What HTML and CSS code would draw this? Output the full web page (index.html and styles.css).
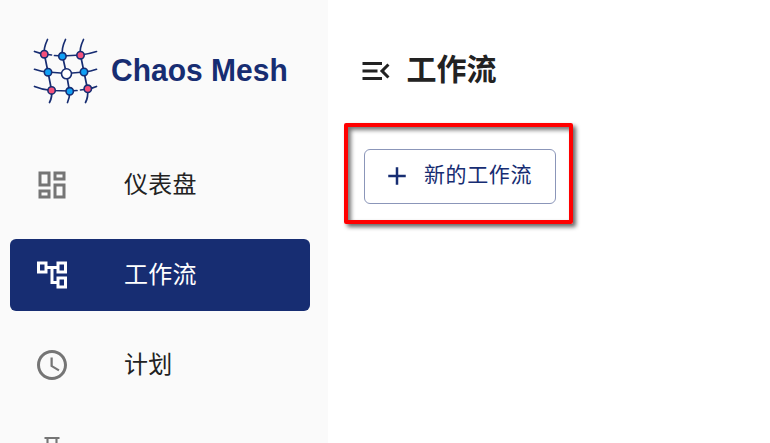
FILE: index.html
```html
<!DOCTYPE html>
<html lang="zh-CN">
<head>
<meta charset="utf-8">
<title>Chaos Mesh</title>
<link rel="stylesheet" href="styles.css">
</head>
<body>
<div class="app">
  <aside class="sidebar">
    <div class="brand">
      <svg class="brand-mark" viewBox="0 0 80 80">
        <g class="mesh">
          <path d="M22.500 9.500Q18 19 19.500 25L23 42L26.500 60Q27.500 67 24.500 72.500"/>
          <path d="M40.500 9.500Q36 19 37.500 26L41.500 44L44.500 61Q45 67 42.500 72.500"/>
          <path d="M58.500 9.500Q54 19 55.500 25L59 42L62.500 59Q63.500 67 60.500 72.500"/>
          <path d="M9.500 21.500Q15 23.500 19.500 24L26.500 25M29.500 25.500L37.500 26L55.500 25Q64 24 71.500 21.500"/>
          <path d="M9.500 39.300Q17 42 23 42L41.500 43.500L59 42Q66 41.500 71.500 39.300"/>
          <path d="M9.500 56.500Q18 60 26.500 60.500L44.500 61L52 60.500M55.500 60L62.500 59Q67 58.500 71.500 56.500"/>
        </g>
        <g class="node pink">
          <circle cx="19.300" cy="24.200" r="3.700"/><circle cx="55.500" cy="25.200" r="3.700"/>
          <circle cx="26.600" cy="60.400" r="3.700"/><circle cx="62.800" cy="58.800" r="3.700"/>
        </g>
        <g class="node blue">
          <circle cx="37.400" cy="26.300" r="3.700"/><circle cx="23" cy="42.200" r="3.700"/>
          <circle cx="59" cy="42" r="3.700"/><circle cx="44.700" cy="61.300" r="3.700"/>
        </g>
        <circle class="node white" cx="41.500" cy="43.800" r="5"/>
      </svg>
      <span class="brand-name">Chaos Mesh</span>
    </div>
    <nav class="nav">
      <a class="nav-item">
        <svg class="icon" viewBox="0 0 24 24"><path d="M19 5v2h-4V5h4M9 5v6H5V5h4m10 8v6h-4v-6h4M9 17v2H5v-2h4M21 3h-8v6h8V3zM11 3H3v10h8V3zm10 8h-8v10h8V11zm-10 4H3v6h8v-6z"/></svg>
        <span>仪表盘</span>
      </a>
      <a class="nav-item active">
        <svg class="icon" viewBox="0 0 24 24"><path d="M22 11V3h-7v3H9V3H2v8h7V8h2v10h4v3h7v-8h-7v3h-2V8h2v3h7zM7 9H4V5h3v4zm10 6h3v4h-3v-4zm0-10h3v4h-3V5z"/></svg>
        <span>工作流</span>
      </a>
      <a class="nav-item">
        <svg class="icon" viewBox="0 0 24 24"><path d="M11.990 2C6.470 2 2 6.480 2 12s4.470 10 9.990 10C17.520 22 22 17.520 22 12S17.520 2 11.990 2zM12 20c-4.420 0-8-3.580-8-8s3.580-8 8-8 8 3.580 8 8-3.580 8-8 8zm.5-13H11v6l5.250 3.150.75-1.230-4.500-2.670z"/></svg>
        <span>计划</span>
      </a>
      <a class="nav-item">
        <svg class="icon" viewBox="0 0 24 24"><path d="M7 0h10v1.400h-1.300V9l5 11v3H3.300v-3l5-11V1.400H7zM9.700 1.400V9.300L5 20v1.500h14V20L14.300 9.300V1.400z"/></svg>
      </a>
    </nav>
  </aside>
  <main class="content">
    <header class="page-head">
      <svg class="icon" viewBox="0 0 24 24"><path d="M3 18h13v-2H3v2zm0-5h10v-2H3v2zm0-7v2h13V6H3zm18 9.590L17.420 12 21 8.410 19.590 7l-5 5 5 5L21 15.590z"/></svg>
      <h1>工作流</h1>
    </header>
    <div class="highlight">
      <button class="new-btn">
        <svg class="plus" viewBox="0 0 24 24"><path d="M19 13h-6v6h-2v-6H5v-2h6V5h2v6h6v2z"/></svg>
        <span>新的工作流</span>
      </button>
    </div>
  </main>
</div>
</body>
</html>
```
FILE: styles.css
```css
* { box-sizing: border-box; }

body {
  margin: 0;
  background: #fff;
  color: #222;
  font-family: "Noto Sans CJK SC", sans-serif;
}

.app {
  display: flex;
  height: 443px;
  overflow: hidden;
}

.sidebar {
  flex: none;
  width: 328px;
  background: #fafafa;
}

.brand {
  display: flex;
  align-items: center;
  height: 140px;
  padding-left: 25px;
}

.brand-mark {
  flex: none;
  width: 80px;
  height: 80px;
}

.mesh { fill: none; stroke: #172d72; stroke-width: 1.7; stroke-linecap: round; }
.node { stroke: #172d72; stroke-width: 1.6; }
.pink { fill: #f5517b; }
.blue { fill: #10a0f5; }
.white { fill: #fff; }

.brand-name {
  margin-left: 6px;
  color: #172d72;
  font: bold 30px/40px "Liberation Sans", sans-serif;
  white-space: nowrap;
  transform: translateY(.6px) scaleY(1.04);
}

.nav {
  display: flex;
  flex-direction: column;
  gap: 18px;
  padding: 9px 18px 0 10px;
}

.nav-item {
  display: flex;
  flex: none;
  align-items: center;
  gap: 54px;
  height: 72px;
  padding-left: 24px;
  border-radius: 6px;
  font-size: 24px;
  letter-spacing: .2px;
  line-height: 36px;
}

.nav-item span { padding-bottom: 4px; }

.icon {
  flex: none;
  width: 36px;
  height: 36px;
  fill: #757575;
}

.active { background: #172d72; color: #fff; }
.active .icon { fill: #fff; }

.content {
  flex: 1;
  padding: 48px 0 0 16px;
}

.page-head {
  display: flex;
  align-items: center;
  gap: 13px;
  height: 45px;
  padding-left: 13.5px;
}

.page-head .icon { fill: #222; }

h1 {
  margin: 0;
  padding-bottom: 6px;
  font-size: 30px;
  font-weight: 700;
  line-height: 45px;
}

.highlight {
  width: 229px;
  height: 101px;
  margin-top: 30px;
  padding: 22px 0 0 16px;
  border: 4px solid #f00;
  border-radius: 2px;
  box-shadow: 3px 3px 4px rgba(0, 0, 0, .6), inset 3px 3px 4px rgba(0, 0, 0, .55);
}

.new-btn {
  display: flex;
  align-items: center;
  gap: 12px;
  width: 192px;
  height: 55px;
  padding: 0 0 2px 17px;
  border: 1px solid #8b96b9;
  border-radius: 6px;
  background: #fff;
  color: #172d72;
  font: 21px/36px "Noto Sans CJK SC", sans-serif;
  letter-spacing: .6px;
  white-space: nowrap;
}

.new-btn span { padding-bottom: 6px; }

.plus { flex: none; width: 30px; height: 30px; fill: #172d72; }
```
